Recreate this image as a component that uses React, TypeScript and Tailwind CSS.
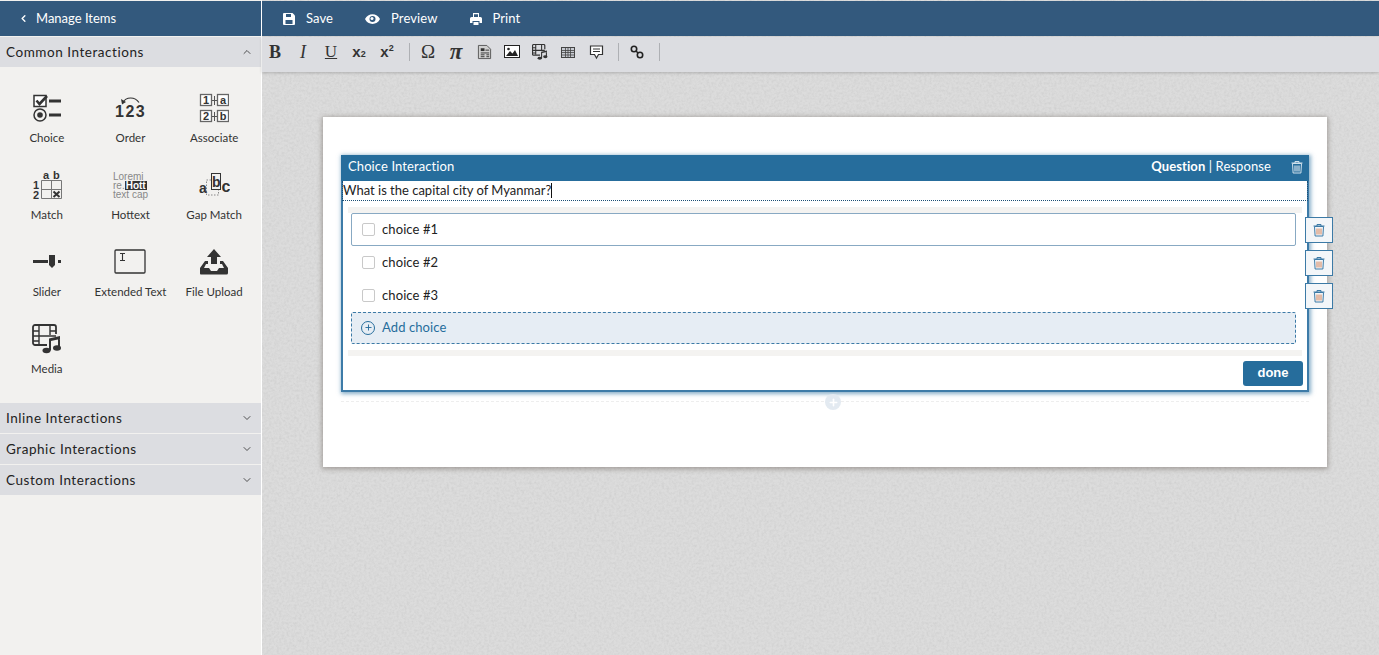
import React from 'react';
import { ChevronDown, ChevronLeft, ChevronUp, Plus } from 'lucide-react';

const ink = '#333333';

const ChoiceIcon = () => (
  <svg width="30" height="30" viewBox="0 0 30 30" fill="none">
    <rect x="2" y="2.500" width="12" height="11" stroke={ink} strokeWidth="1.500" fill="#fff" />
    <path d="M4.500 7.500l3 3.500L15 3" stroke={ink} strokeWidth="2.600" />
    <rect x="17" y="6.500" width="12" height="3" fill={ink} />
    <circle cx="8" cy="22" r="6" stroke={ink} strokeWidth="1.500" />
    <circle cx="8" cy="22" r="2.800" fill={ink} />
    <rect x="17" y="20.500" width="12" height="3" fill={ink} />
  </svg>
);

const OrderIcon = () => (
  <svg width="36" height="30" viewBox="0 0 36 30" fill="none">
    <path d="M11 9.500c3-6 12-6 16 0" stroke={ink} strokeWidth="1.200" />
    <path d="M9 6l1 5.500 4-2.500z" fill={ink} />
    <text x="3" y="24" fontFamily="'Liberation Sans'" fontWeight="700" fontSize="16" fill={ink} letterSpacing="1.500">
      123
    </text>
  </svg>
);

const AssociateIcon = () => (
  <svg width="30" height="30" viewBox="0 0 30 30" fill="none">
    {[
      [1, 1, '1'],
      [18, 1, 'a'],
      [1, 17, '2'],
      [18, 17, 'b'],
    ].map(([x, y, t]) => (
      <g key={String(t)}>
        <rect x={Number(x) + 0.500} y={Number(y) + 0.500} width="11" height="11" fill="#fff" stroke="#666" strokeWidth="1.300" />
        <text x={Number(x) + 6} y={Number(y) + 10} textAnchor="middle" fontFamily="'Liberation Sans'" fontWeight="700" fontSize="11" fill={ink}>
          {t}
        </text>
      </g>
    ))}
    <path d="M13 7.500h5M15.500 3v9M13 23.500h5M15.500 19v9" stroke="#555" />
  </svg>
);

const MatchIcon = () => (
  <svg width="30" height="30" viewBox="0 0 30 30" fill="none">
    <text x="11" y="9" fontFamily="'Liberation Sans'" fontWeight="700" fontSize="11" fill={ink}>a</text>
    <text x="21" y="9" fontFamily="'Liberation Sans'" fontWeight="700" fontSize="11" fill={ink}>b</text>
    <text x="1" y="19" fontFamily="'Liberation Sans'" fontWeight="700" fontSize="11" fill={ink}>1</text>
    <text x="1" y="29" fontFamily="'Liberation Sans'" fontWeight="700" fontSize="11" fill={ink}>2</text>
    <path d="M9.500 10.500h20v18h-20zM9.500 19.500h20M19.500 10.500v18" stroke="#777" />
    <path d="M21.500 21.500l6 5.500M27.500 21.500l-6 5.500" stroke={ink} strokeWidth="2" />
  </svg>
);

const HottextIcon = () => (
  <div className="flex w-[35px] flex-col font-['Liberation_Sans',sans-serif] text-[10px] leading-[9px] text-[#888]">
    <span>Loremi</span>
    <span className="flex">
      re.<span className="bg-[#333] px-[1px] font-bold text-white">Hott</span>
    </span>
    <span className="whitespace-nowrap">text cap</span>
  </div>
);

const GapMatchIcon = () => (
  <svg width="32" height="30" viewBox="0 0 32 30" fill="none">
    <rect x="8.500" y="10" width="12" height="15" stroke="#888" strokeDasharray="1.500 1.500" />
    <rect x="13.500" y="3.500" width="9" height="16" fill="#f2f1ef" stroke={ink} />
    <text x="1" y="23" fontFamily="'Liberation Sans'" fontWeight="700" fontSize="14" fill={ink}>a</text>
    <text x="14" y="17" fontFamily="'Liberation Sans'" fontWeight="700" fontSize="14" fill={ink}>b</text>
    <text x="23.500" y="22" fontFamily="'Liberation Sans'" fontWeight="700" fontSize="16" fill={ink}>c</text>
  </svg>
);

const SliderIcon = () => (
  <svg width="30" height="30" viewBox="0 0 30 30" fill="none">
    <rect x="1" y="13" width="15" height="3" fill={ink} />
    <path d="M17 8h6v10l-3 3-3-3z" fill={ink} />
    <rect x="26" y="13" width="3" height="3" fill={ink} />
  </svg>
);

const ExtendedTextIcon = () => (
  <svg width="32" height="26" viewBox="0 0 32 26" fill="none">
    <rect x="1" y="1" width="30" height="23" rx="1" stroke={ink} strokeWidth="1.300" />
    <path d="M6 4.500h5M6 11.500h5M8.500 4.500v7" stroke={ink} strokeWidth="1.100" />
  </svg>
);

const UploadIcon = () => (
  <svg width="30" height="28" viewBox="0 0 30 28" fill="none">
    <path d="M15 1l7 8h-4v7h-6V9H8z" fill={ink} />
    <path d="M1 25v-5l5-7h3v3H7l-2 4h5l2 3h6l2-3h5l-2-4h-2v-3h3l5 7v5a1.500 1.500 0 0 1-1.500 1.500h-26A1.500 1.500 0 0 1 1 25z" fill={ink} />
  </svg>
);

const MediaIcon = () => (
  <svg width="30" height="30" viewBox="0 0 30 30" fill="none">
    <path d="M15 21H3a2 2 0 0 1-2-2V3a2 2 0 0 1 2-2h19a2 2 0 0 1 2 2v7" stroke={ink} strokeWidth="1.800" />
    <path d="M7 2v18M1 7h6M1 12h23M1 17h6M18 2v9M18 7h6" stroke={ink} strokeWidth="1.400" />
    <path d="M17 14.500l11-2.500v3l-9 2v9.500h-2zM26 14h2v10h-2z" fill={ink} />
    <ellipse cx="14.500" cy="26.500" rx="4" ry="2.800" fill={ink} />
    <ellipse cx="25" cy="24" rx="4" ry="2.800" fill={ink} />
  </svg>
);

const Trash = ({ body, lines, size = 14 }: { body: string; lines: string; size?: number }) => (
  <svg width={size} height={size} viewBox="0 0 14 14" fill="none">
    <path d="M2.500 3.500h9l-.6 9.500H3.100z" stroke={body} />
    <path d="M1.500 3h11M5 3V1.500h4V3" stroke={body} />
    <path d="M5 5.500V11.500M7 5.500V11.500M9 5.500V11.500" stroke={lines} strokeWidth="1.200" />
  </svg>
);

const items = [
  { label: 'Choice', icon: <ChoiceIcon /> },
  { label: 'Order', icon: <OrderIcon /> },
  { label: 'Associate', icon: <AssociateIcon /> },
  { label: 'Match', icon: <MatchIcon /> },
  { label: 'Hottext', icon: <HottextIcon /> },
  { label: 'Gap Match', icon: <GapMatchIcon /> },
  { label: 'Slider', icon: <SliderIcon /> },
  { label: 'Extended Text', icon: <ExtendedTextIcon /> },
  { label: 'File Upload', icon: <UploadIcon /> },
  { label: 'Media', icon: <MediaIcon /> },
];

const SectionHeader = ({ label, open }: { label: string; open?: boolean }) => (
  <div className="flex h-[30px] items-center justify-between bg-[#dcdde1] pl-[6px] pr-[8px] text-[13.5px] tracking-[0.55px] text-[#222]">
    <span>{label}</span>
    {open ? <ChevronUp size={12} strokeWidth={1.500} /> : <ChevronDown size={12} strokeWidth={1.500} />}
  </div>
);

const ToolSep = () => <div className="ml-[8px] mr-[4px] h-[18px] w-px bg-[#aeb0b4]" />;

const Tool = ({ children, className = '' }: { children: React.ReactNode; className?: string }) => (
  <div className={`flex h-[20px] w-[28px] items-center justify-center text-[#333] ${className}`}>{children}</div>
);

const serif = "font-['Liberation_Serif',serif]";

const Toolbar = () => (
  <div className="flex h-[35px] shrink-0 items-center bg-[#dcdde1] pb-[5px] shadow-[0_1px_3px_rgba(0,0,0,0.2)]">
    <Tool className={`-ml-px ${serif} text-[18px] font-bold`}>B</Tool>
    <Tool className={`${serif} text-[18px] italic`}>I</Tool>
    <Tool className={`${serif} text-[17px] underline`}>U</Tool>
    <Tool className="font-['Liberation_Sans',sans-serif] text-[15px] font-bold">
      x<sub className="text-[9px]">2</sub>
    </Tool>
    <Tool className="font-['Liberation_Sans',sans-serif] text-[15px] font-bold">
      x<sup className="text-[9px]">2</sup>
    </Tool>
    <ToolSep />
    <Tool className={`${serif} text-[19px]`}>Ω</Tool>
    <Tool className={`${serif} text-[23px] font-bold italic`}>π</Tool>
    <Tool>
      <svg width="15" height="16" viewBox="0 0 16 16" fill="none">
        <path d="M1.500 1h9l4 4v10h-13z" fill="#d0d0d0" stroke="#555" />
        <path d="M4 4h4v3H4z" fill="#333" />
        <path d="M9 6h4M4 9h9M4 11h4M10 11h3M4 13h4M10 13h3" stroke="#333" />
      </svg>
    </Tool>
    <Tool>
      <svg width="16" height="14" viewBox="0 0 16 14" fill="none">
        <rect x="0.500" y="0.500" width="15" height="12" fill="#fff" stroke="#222" />
        <path d="M2 11l4-5 2.500 2.500L11 5l3 6z" fill="#222" />
        <circle cx="4.500" cy="4" r="1.300" fill="#222" />
      </svg>
    </Tool>
    <Tool>
      <svg width="16" height="16" viewBox="0 0 30 30" fill="none">
        <path d="M15 21H3a2 2 0 0 1-2-2V3a2 2 0 0 1 2-2h19a2 2 0 0 1 2 2v7" stroke={ink} strokeWidth="2.200" />
        <path d="M7 2v18M1 7h6M1 12h23M1 17h6M18 2v9" stroke={ink} strokeWidth="2" />
        <path d="M17 14.500l11-2.500v3l-9 2v9.500h-2zM26 14h2v10h-2z" fill={ink} />
        <ellipse cx="14.500" cy="26.500" rx="4" ry="2.800" fill={ink} />
        <ellipse cx="25" cy="24" rx="4" ry="2.800" fill={ink} />
      </svg>
    </Tool>
    <Tool>
      <svg width="14" height="11" viewBox="0 0 14 11" fill="none">
        <rect x="0.500" y="0.500" width="13" height="10" fill="#c8cbd2" stroke="#444" />
        <path d="M0.500 3.500h13M0.500 5.500h13M0.500 8h13M4.500 1v9M7 1v9M9.500 1v9" stroke="#444" strokeWidth="0.800" />
      </svg>
    </Tool>
    <Tool>
      <svg width="15" height="15" viewBox="0 0 15 15" fill="none">
        <path d="M1.500 1h12v8.500H9.500L7.500 13l-2-3.500h-4z" fill="#fff" stroke="#333" strokeWidth="1.200" />
        <path d="M4 4h7M4 6.500h7" stroke="#333" />
      </svg>
    </Tool>
    <ToolSep />
    <Tool>
      <svg width="14" height="14" viewBox="0 0 14 14" fill="none">
        <circle cx="4" cy="4" r="2.700" stroke="#222" strokeWidth="1.600" />
        <circle cx="10" cy="10" r="2.700" stroke="#222" strokeWidth="1.600" />
        <path d="M6 6l2 2" stroke="#222" strokeWidth="1.600" />
      </svg>
    </Tool>
    <ToolSep />
  </div>
);

const TopAction = ({ icon, label }: { icon: React.ReactNode; label: string }) => (
  <div className="flex items-center gap-[11px]">
    {icon}
    <span className="pt-px">{label}</span>
  </div>
);

const ChoiceRow = ({ label, selected }: { label: string; selected?: boolean }) => (
  <div className={`relative flex h-[33px] items-center gap-[7px] pl-[10px] text-[13px] tracking-[0.1px] text-[#222] ${selected ? 'rounded-[2px] border border-[#88a9c3]' : 'border border-transparent'}`}>
    <span className="h-[13px] w-[13px] rounded-[2px] border border-[#c9c9c9] bg-white" />
    <span>{label}</span>
    <div className="absolute right-[-38px] top-[3px] flex h-[26px] w-[28px] items-center justify-center border border-[#3c7aa6] bg-[#f3f6f9]">
      <Trash body="#3c7aa6" lines="#d99572" />
    </div>
  </div>
);

export default function App() {
  return (
    <div className="flex h-screen w-full overflow-hidden bg-[#dcdcdc] font-['Lato',sans-serif]">
      <aside className="flex w-[262px] shrink-0 flex-col border-r border-white bg-[#f2f1ef]">
        <div className="mt-px flex h-[35px] items-center gap-[7px] bg-[#33597d] pl-[18px] text-[13px] text-white">
          <ChevronLeft size={11} strokeWidth={3} />
          <span className="pt-px">Manage Items</span>
        </div>
        <div className="mt-px">
          <SectionHeader label="Common Interactions" open />
        </div>
        <div className="grid h-[335px] grid-cols-3 content-start px-[5px] pt-[25px] auto-rows-[77px]">
          {items.map((item) => (
            <div key={item.label} className="flex flex-col items-center">
              <div className="flex h-[32px] items-center justify-center">{item.icon}</div>
              <span className="mt-[6px] whitespace-nowrap text-[11.5px] leading-[16px] text-[#333]">{item.label}</span>
            </div>
          ))}
        </div>
        <div className="flex flex-col gap-px pt-px">
          <SectionHeader label="Inline Interactions" />
          <SectionHeader label="Graphic Interactions" />
          <SectionHeader label="Custom Interactions" />
        </div>
      </aside>

      <main className="relative flex min-w-0 flex-1 flex-col">
        <svg className="absolute inset-0 h-full w-full" aria-hidden="true">
          <filter id="paper">
            <feTurbulence type="fractalNoise" baseFrequency="0.4" numOctaves="3" seed="4" />
            <feColorMatrix type="matrix" values="0 0 0 0 0.55 0 0 0 0 0.55 0 0 0 0 0.55 0.6 0.6 0 0 -0.48" />
          </filter>
          <rect width="100%" height="100%" filter="url(#paper)" />
        </svg>

        <div className="relative mt-px flex h-[35px] shrink-0 items-center gap-[32px] bg-[#33597d] pl-[21px] text-[13px] tracking-[0.1px] text-white">
          <TopAction
            label="Save"
            icon={
              <svg width="12" height="12" viewBox="0 0 12 12">
                <path d="M0 1a1 1 0 0 1 1-1h8.500L12 2.500V11a1 1 0 0 1-1 1H1a1 1 0 0 1-1-1z" fill="#fff" />
                <path d="M3 1h5v3H3zM2.500 7h7v4h-7z" fill="#33597d" />
              </svg>
            }
          />
          <TopAction
            label="Preview"
            icon={
              <svg width="15" height="10" viewBox="0 0 15 10">
                <path d="M0 5c3-6.500 12-6.500 15 0-3 6.500-12 6.500-15 0z" fill="#fff" />
                <circle cx="7.500" cy="5" r="3" fill="#33597d" />
                <circle cx="7" cy="4.500" r="1.500" fill="#fff" />
              </svg>
            }
          />
          <TopAction
            label="Print"
            icon={
              <svg width="12" height="12" viewBox="0 0 12 12">
                <path d="M3 0h6v4H8V1.200H4V4H3z" fill="#fff" />
                <path d="M0 5.500A1.500 1.500 0 0 1 1.500 4h9A1.500 1.500 0 0 1 12 5.500V10H9.500V8h-7v2H0z" fill="#fff" />
                <path d="M3.500 9h5v3h-5z" fill="#fff" />
              </svg>
            }
          />
        </div>
        <div className="relative mt-px">
          <Toolbar />
        </div>

        <div className="relative flex-1 pl-[61px] pr-[52px] pt-[45px]">
          <div className="h-[350px] bg-white px-[18px] pt-[38px] shadow-[0_1px_5px_1px_rgba(90,80,70,0.45)]">
            <section className="border-2 border-t-0 border-[#3d7ba8] bg-white shadow-[1px_1px_4px_1px_rgba(38,109,156,0.55)]">
              <header className="-mx-[2px] flex h-[26px] items-center justify-between bg-[#266d9c] pb-[2px] pl-[7px] pr-[5px] text-[13px] tracking-[0.1px] text-white">
                <span>Choice Interaction</span>
                <div className="flex items-center gap-[19px]">
                  <span>
                    <b className="font-bold">Question</b> | Response
                  </span>
                  <Trash body="#cfe0ec" lines="#cfe0ec" />
                </div>
              </header>
              <div className="-mx-px flex h-[20px] items-center border-x border-b border-dotted border-[#1c4f75] text-[13px] leading-none text-[#222]">
                <span>What is the capital city of Myanmar?</span>
                <span className="h-[15px] w-px bg-[#111]" />
              </div>
              <div className="mx-[5px] mt-[6px] bg-[#f4f3f1] py-[6px]">
                <div className="bg-white pb-[6px] pl-[3px] pr-[6px]">
                  <ChoiceRow label="choice #1" selected />
                  <ChoiceRow label="choice #2" />
                  <ChoiceRow label="choice #3" />
                  <div className="flex h-[32px] items-center gap-[7px] rounded-[2px] border border-dashed border-[#3c7aa6] bg-[#e6edf4] pl-[9px] text-[13px] tracking-[0.1px] text-[#266d9c]">
                    <span className="mb-px flex h-[14px] w-[14px] items-center justify-center rounded-full border border-[#266d9c]">
                      <Plus size={9} strokeWidth={2.500} />
                    </span>
                    <span>Add choice</span>
                  </div>
                </div>
              </div>
              <div className="flex h-[34px] items-center justify-end pr-[4px]">
                <button className="flex h-[25px] w-[60px] items-center justify-center rounded-[3px] bg-[#266d9c] font-['Liberation_Sans',sans-serif] text-[13px] font-bold text-white">
                  done
                </button>
              </div>
            </section>
            <div className="relative mt-[9px] border-t border-dashed border-[#eeeeee]">
              <span className="absolute left-[484px] top-[-8px] flex h-[16px] w-[16px] items-center justify-center rounded-full bg-[#e3eaf1] text-white">
                <Plus size={11} strokeWidth={3.500} />
              </span>
            </div>
          </div>
        </div>
      </main>
    </div>
  );
}
